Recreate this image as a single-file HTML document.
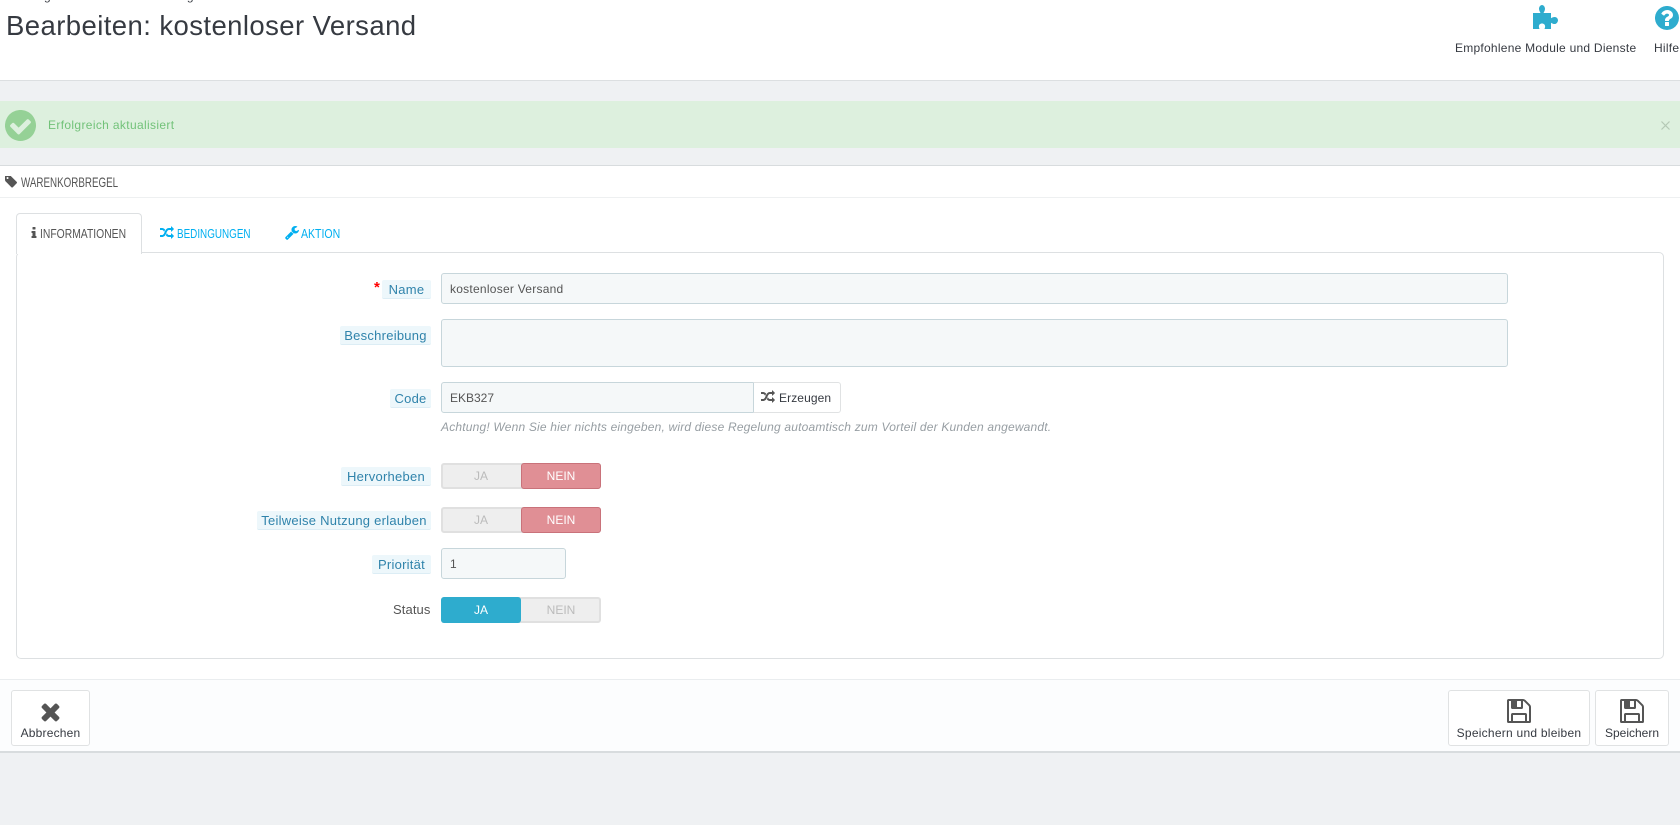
<!DOCTYPE html>
<html lang="de"><head><meta charset="utf-8"><title>Bearbeiten: kostenloser Versand</title>
<style>
html,body{margin:0;padding:0;width:1680px;height:825px;overflow:hidden;background:#eff1f3;font-family:"Liberation Sans",sans-serif;color:#363a41}
.a{position:absolute;white-space:nowrap}
.b{position:absolute;box-sizing:border-box}
.t{position:absolute;white-space:nowrap;line-height:16px;font-size:12px}
.n{transform-origin:0 50%}
.lab{position:absolute;box-sizing:border-box;height:19px;line-height:20px;background:#edf7fb;border-bottom:1px solid #dcedf5;border-radius:2px;color:#2f83ab;font-size:13px;text-align:center;white-space:nowrap;letter-spacing:.25px}
.inp{position:absolute;box-sizing:border-box;background:#f5f8f9;border:1px solid #c7d6db;border-radius:3px;color:#555;font-size:12px;padding-left:8px;white-space:nowrap}
.sw{position:absolute;left:441px;width:160px;height:26px;box-sizing:border-box;background:#eee;border:2px solid #e0e0e0;border-radius:3px;font-size:12px;color:#bbb;line-height:22px}
.sw span{position:absolute;top:0;text-align:center}
.on{position:absolute;top:-2px;height:26px;width:80px;box-sizing:border-box;border-radius:3px;color:#fff;text-align:center;line-height:24px;font-size:12px}
.btn{position:absolute;box-sizing:border-box;top:690px;height:56px;background:#fff;border:1px solid #e0e2e3;border-radius:3px;font-size:12px;color:#363a41;text-align:center}
.btn svg{position:absolute;top:8px}
.btn div{position:absolute;left:0;right:0;top:35px;line-height:14px;white-space:nowrap}
svg{display:block;position:absolute}
</style></head><body>

<div class="b" style="left:0;top:0;width:1680px;height:81px;background:#fff;border-bottom:1px solid #dcdfe1"></div>
<div class="t" style="left:6px;top:-12px;font-size:12px;color:#363a41">Preisregeln</div>
<div class="t" style="left:118px;top:-12px;font-size:12px;color:#363a41">Warenkorbregeln</div>
<div class="a" style="left:6px;top:9px;font-size:27.5px;line-height:34px;color:#363a41;letter-spacing:.42px">Bearbeiten: kostenloser Versand</div>

<svg style="left:1532px;top:4px" width="28" height="26" viewBox="0 0 28 26"><path fill="#2eacce" fill-rule="evenodd" d="M1 9h7.500C8 8 7 6.500 7 4.800 7 3 8.300 1 10 1s3 2 3 3.800c0 1.700-1 3.200-1.500 4.200H19v5.300c1-.7 2.200-1.300 3.700-1.300 1.900 0 3.300 1.700 3.300 3.200S24.600 20 22.700 20c-1.500 0-2.700-.6-3.700-1.300V25h-6.500c.3-.9.600-1.600.6-2.600 0-1.700-1.300-2.900-3.100-2.900s-3.100 1.200-3.100 2.900c0 1 .3 1.700.6 2.600H1z"/></svg>
<svg style="left:1655px;top:6px" width="24" height="24" viewBox="130 130 1534 1534"><path fill="#2eacce" d="M1024 1376v-192q0-14-9-23t-23-9h-192q-14 0-23 9t-9 23v192q0 14 9 23t23 9h192q14 0 23-9t9-23zm256-672q0-88-55.500-163t-138.500-116-170-41q-243 0-371 213-15 24 8 42l132 100q7 6 19 6 16 0 25-12 53-68 86-92 34-24 86-24 48 0 85.500 26t37.500 59q0 38-20 61t-68 45q-63 28-115.500 86.500t-52.500 125.500v36q0 14 9 23t23 9h192q14 0 23-9t9-23q0-19 21.500-49.500t54.500-49.500q32-18 49-28.500t46-35 44.500-48 28-60.500 12.500-81zm384 192q0 209-103 385.500t-279.500 279.500-385.500 103-385.500-103-279.500-279.500-103-385.500 103-385.500 279.500-279.500 385.500-103 385.500 103 279.500 279.500 103 385.500z"/></svg>
<div class="t" style="left:1455px;top:40px;letter-spacing:.25px">Empfohlene Module und Dienste</div>
<div class="t" style="left:1654px;top:40px;letter-spacing:.25px">Hilfe</div>

<div class="b" style="left:0;top:101px;width:1680px;height:47px;background:#ddf0de"></div>
<svg style="left:5px;top:110px" width="31" height="31" viewBox="130 130 1534 1534"><path fill="#95d196" d="M1412 734q0-28-18-46l-91-90q-19-19-45-19t-45 19l-408 407-226-226q-19-19-45-19t-45 19l-91 90q-18 18-18 46 0 27 18 45l362 362q19 19 45 19 27 0 46-19l543-543q18-18 18-45zm252 162q0 209-103 385.500t-279.500 279.500-385.500 103-385.500-103-279.500-279.500-103-385.500 103-385.500 279.500-279.500 385.500-103 385.500 103 279.500 279.500 103 385.500z"/></svg>
<div class="t" style="left:48px;top:117px;color:#72c279;letter-spacing:.35px">Erfolgreich aktualisiert</div>
<svg style="left:1661px;top:121px" width="9" height="9" viewBox="0 0 9 9"><path d="M.5.500l8 8M8.500.500l-8 8" stroke="#b4c8b5" stroke-width="1.200" fill="none"/></svg>

<div class="b" style="left:0;top:165px;width:1680px;height:514px;background:#fff;border-top:1px solid #d8dcde"></div>
<div class="b" style="left:0;top:197px;width:1680px;height:1px;background:#eef0f1"></div>
<svg style="left:5px;top:176px" width="12" height="12" viewBox="128 192 1515 1515"><path fill="#555" d="M576 448q0-53-37.500-90.500t-90.500-37.500-90.500 37.500-37.500 90.500 37.500 90.500 90.500 37.500 90.500-37.500 37.500-90.500zm1067 576q0 53-37 90l-491 492q-39 37-91 37-53 0-90-37l-715-716q-38-37-64.500-101t-26.500-117v-416q0-52 38-90t90-38h416q53 0 117 26.500t102 64.500l715 714q37 39 37 91z"/></svg>
<div class="t n" style="left:21px;top:174px;font-size:14px;color:#555;transform:scaleX(.7)">WARENKORBREGEL</div>

<div class="b" style="left:16px;top:252px;width:1648px;height:407px;border:1px solid #dde0e2;border-radius:5px;background:#fff"></div>
<div class="b" style="left:16px;top:213px;width:126px;height:41px;background:#fff;border:1px solid #dde0e2;border-bottom:0;border-radius:4px 4px 0 0"></div>
<svg style="left:27px;top:226px" width="14" height="14" viewBox="0 0 1792 1792"><path fill="#555" d="M1216 1344v128q0 26-19 45t-45 19h-512q-26 0-45-19t-19-45v-128q0-26 19-45t45-19h64v-384h-64q-26 0-45-19t-19-45v-128q0-26 19-45t45-19h384q26 0 45 19t19 45v576h64q26 0 45 19t19 45zm-128-1152v192q0 26-19 45t-45 19h-256q-26 0-45-19t-19-45v-192q0-26 19-45t45-19h256q26 0 45 19t19 45z"/></svg>
<div class="t n" style="left:40px;top:226px;font-size:13px;color:#555;transform:scaleX(.796)">INFORMATIONEN</div>
<svg style="left:160px;top:226px" width="14" height="14" viewBox="0 128 1792 1536"><path fill="#00aff0" d="M666 481q-60 92-137 273-22-45-37-72.500t-40.500-63.500-51-56.500-63-35-81.500-14.500h-224q-14 0-23-9t-9-23v-192q0-14 9-23t23-9h224q250 0 410 225zm1126 799q0 14-9 23l-320 320q-9 9-23 9-13 0-22.500-9.500t-9.500-22.500v-192q-32 0-85 .5t-81 1-73-1-71-5-64-10.500-63-18.500-58-28.500-59-40-55-53.500-56-69.500q59-93 136-273 22 45 37 72.500t40.500 63.500 51 56.500 63 35 81.500 14.500h256v-192q0-14 9-23t23-9q12 0 24 10l319 319q9 9 9 23zm0-896q0 14-9 23l-320 320q-9 9-23 9-13 0-22.500-9.500t-9.500-22.500v-192h-256q-48 0-87 15t-69 45-51 61.500-45 77.500q-32 62-78 171-29 66-49.500 111t-54 105-64 100-74 83-90 68.500-106.500 42-128 16.500h-224q-14 0-23-9t-9-23v-192q0-14 9-23t23-9h224q48 0 87-15t69-45 51-61.500 45-77.500q32-62 78-171 29-66 49.500-111t54-105 64-100 74-83 90-68.500 106.500-42 128-16.500h256v-192q0-14 9-23t23-9q12 0 24 10l319 319q9 9 9 23z"/></svg>
<div class="t n" style="left:177px;top:226px;font-size:13px;color:#00aff0;transform:scaleX(.76)">BEDINGUNGEN</div>
<svg style="left:285px;top:226px" width="14" height="14" viewBox="64 128 1664 1664"><path fill="#00aff0" d="M448 1472q0-26-19-45t-45-19-45 19-19 45 19 45 45 19 45-19 19-45zm644-420l-682 682q-37 37-90 37-52 0-91-37l-106-108q-38-36-38-90 0-53 38-91l681-681q39 98 114.500 173.500t173.500 114.500zm634-435q0 39-23 106-47 134-164.500 217.500t-258.500 83.500q-185 0-316.500-131.500t-131.500-316.500 131.500-316.500 316.500-131.500q58 0 121.500 16.500t107.500 46.500q16 11 16 28t-16 28l-293 169v224l193 107q5-3 79-48.500t135.500-81 70.500-35.500q15 0 23.500 10t8.500 25z"/></svg>
<div class="t n" style="left:301px;top:226px;font-size:13px;color:#00aff0;transform:scaleX(.81)">AKTION</div>

<div class="t" style="left:374px;top:280px;color:#f00;font-size:15px;font-weight:bold">*</div>
<div class="lab" style="left:382px;top:280px;width:49px">Name</div>
<div class="inp" style="left:441px;top:273px;width:1067px;height:31px;line-height:30px;letter-spacing:.25px">kostenloser Versand</div>
<div class="lab" style="left:340px;top:326px;width:91px">Beschreibung</div>
<div class="inp" style="left:441px;top:319px;width:1067px;height:48px"></div>
<div class="lab" style="left:390px;top:389px;width:41px">Code</div>
<div class="inp" style="left:441px;top:382px;width:313px;height:31px;line-height:30px;border-radius:3px 0 0 3px">EKB327</div>
<div class="b" style="left:753px;top:382px;width:88px;height:31px;background:#fff;border:1px solid #e0e2e3;border-left-color:#c7d6db;border-radius:0 3px 3px 0"></div>
<svg style="left:761px;top:390px" width="14" height="14" viewBox="0 128 1792 1536"><path fill="#555" d="M666 481q-60 92-137 273-22-45-37-72.500t-40.500-63.500-51-56.500-63-35-81.500-14.500h-224q-14 0-23-9t-9-23v-192q0-14 9-23t23-9h224q250 0 410 225zm1126 799q0 14-9 23l-320 320q-9 9-23 9-13 0-22.500-9.500t-9.500-22.500v-192q-32 0-85 .5t-81 1-73-1-71-5-64-10.500-63-18.500-58-28.500-59-40-55-53.500-56-69.500q59-93 136-273 22 45 37 72.500t40.500 63.500 51 56.500 63 35 81.500 14.500h256v-192q0-14 9-23t23-9q12 0 24 10l319 319q9 9 9 23zm0-896q0 14-9 23l-320 320q-9 9-23 9-13 0-22.500-9.500t-9.500-22.500v-192h-256q-48 0-87 15t-69 45-51 61.500-45 77.500q-32 62-78 171-29 66-49.500 111t-54 105-64 100-74 83-90 68.500-106.500 42-128 16.500h-224q-14 0-23-9t-9-23v-192q0-14 9-23t23-9h224q48 0 87-15t69-45 51-61.500 45-77.500q32-62 78-171 29-66 49.500-111t54-105 64-100 74-83 90-68.500 106.500-42 128-16.500h256v-192q0-14 9-23t23-9q12 0 24 10l319 319q9 9 9 23z"/></svg>
<div class="t" style="left:779px;top:390px;color:#363a41;letter-spacing:.1px">Erzeugen</div>
<div class="t" style="left:441px;top:419px;font-style:italic;font-size:12px;color:#979ea3;letter-spacing:.19px">Achtung! Wenn Sie hier nichts eingeben, wird diese Regelung autoamtisch zum Vorteil der Kunden angewandt.</div>

<div class="lab" style="left:341px;top:467px;width:90px">Hervorheben</div>
<div class="sw" style="top:463px"><span style="left:0;width:76px">JA</span><div class="on" style="left:78px;width:80px;background:#e08f95;border:1px solid #c9727a">NEIN</div></div>
<div class="lab" style="left:257px;top:511px;width:174px">Teilweise Nutzung erlauben</div>
<div class="sw" style="top:507px"><span style="left:0;width:76px">JA</span><div class="on" style="left:78px;width:80px;background:#e08f95;border:1px solid #c9727a">NEIN</div></div>
<div class="lab" style="left:372px;top:555px;width:59px">Priorität</div>
<div class="inp" style="left:441px;top:548px;width:125px;height:31px;line-height:30px">1</div>
<div class="t" style="left:393px;top:602px;font-size:13px;color:#555;letter-spacing:.1px">Status</div>
<div class="sw" style="top:597px"><div class="on" style="left:-2px;width:80px;background:#2eacce;line-height:26px">JA</div><span style="left:78px;width:80px">NEIN</span></div>

<div class="b" style="left:0;top:679px;width:1680px;height:74px;background:#fcfdfe;border-top:1px solid #eaedef;border-bottom:2px solid #d8dcde"></div>
<div class="btn" style="left:11px;width:79px"><svg style="left:25px;top:7px" width="27" height="27" viewBox="0 0 1792 1792"><path fill="#555" d="M1490 1322q0 40-28 68l-136 136q-28 28-68 28t-68-28l-294-294-294 294q-28 28-68 28t-68-28l-136-136q-28-28-28-68t28-68l294-294-294-294q-28-28-28-68t28-68l136-136q28-28 68-28t68 28l294 294 294-294q28-28 68-28t68 28l136 136q28 28 28 68t-28 68l-294 294 294 294q28 28 28 68z"/></svg><div style="letter-spacing:.2px">Abbrechen</div></div>
<div class="btn" style="left:1448px;width:142px"><svg style="left:58px;top:8px" width="24" height="24" viewBox="128 128 1536 1536"><path fill="#555" d="M512 1536h768v-384h-768v384zm896 0h128v-896q0-14-10-38.500t-20-34.500l-281-281q-10-10-34-20t-39-10v416q0 40-28 68t-68 28h-576q-40 0-68-28t-28-68v-416h-128v1280h128v-416q0-40 28-68t68-28h832q40 0 68 28t28 68v416zm-384-928v-320q0-13-9.500-22.500t-22.500-9.500h-192q-13 0-22.500 9.500t-9.500 22.500v320q0 13 9.500 22.500t22.500 9.500h192q13 0 22.500-9.500t9.500-22.500zm640 32v928q0 40-28 68t-68 28h-1344q-40 0-68-28t-28-68v-1344q0-40 28-68t68-28h928q40 0 88 20t76 48l280 280q28 28 48 76t20 88z"/></svg><div style="letter-spacing:.25px">Speichern und bleiben</div></div>
<div class="btn" style="left:1595px;width:74px"><svg style="left:24px;top:8px" width="24" height="24" viewBox="128 128 1536 1536"><path fill="#555" d="M512 1536h768v-384h-768v384zm896 0h128v-896q0-14-10-38.500t-20-34.500l-281-281q-10-10-34-20t-39-10v416q0 40-28 68t-68 28h-576q-40 0-68-28t-28-68v-416h-128v1280h128v-416q0-40 28-68t68-28h832q40 0 68 28t28 68v416zm-384-928v-320q0-13-9.500-22.500t-22.500-9.500h-192q-13 0-22.500 9.500t-9.500 22.500v320q0 13 9.500 22.500t22.500 9.500h192q13 0 22.500-9.500t9.500-22.500zm640 32v928q0 40-28 68t-68 28h-1344q-40 0-68-28t-28-68v-1344q0-40 28-68t68-28h928q40 0 88 20t76 48l280 280q28 28 48 76t20 88z"/></svg><div>Speichern</div></div>
</body></html>
